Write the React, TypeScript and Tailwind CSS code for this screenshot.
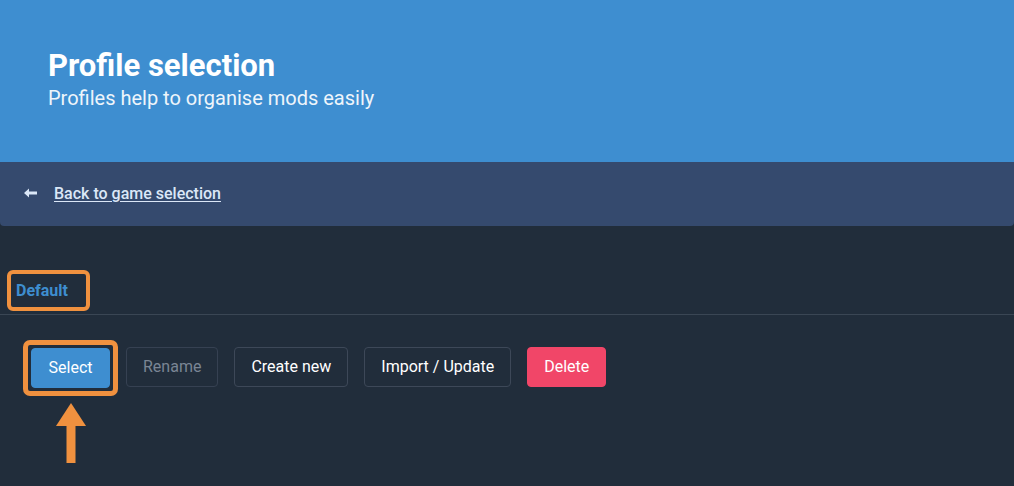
import React from 'react';

const buttons = [
  { label: 'Rename', cls: 'border border-[#364152] text-[#7a8594] bg-transparent' },
  { label: 'Create new', cls: 'border border-[#3d4858] text-white bg-transparent' },
  { label: 'Import / Update', cls: 'border border-[#3d4858] text-white bg-transparent' },
  { label: 'Delete', cls: 'border border-[#f14668] text-white bg-[#f14668]' },
];

export default function App() {
  return (
    <div className="w-[1014px] h-[486px] overflow-hidden bg-[#212d3b] font-['Roboto',sans-serif]">
      {/* hero */}
      <div className="h-[162px] bg-[#3e8ed0] px-12 pt-[46px]">
        <h1 className="text-[31px] leading-[40px] font-bold text-white">Profile selection</h1>
        <p className="text-[20px] leading-[24px] text-[#eef5fb]">Profiles help to organise mods easily</p>
      </div>

      {/* back bar */}
      <div className="h-16 bg-[#354a6e] rounded-b-[4px] flex items-center pl-6 gap-[17px]">
        <svg width="13" height="10" viewBox="0 0 13 10" className="mt-[-2px]">
          <path d="M0 5 L5 0.5 L5 3.6 L13 3.6 L13 6.4 L5 6.4 L5 9.5 Z" fill="#dbe7f7" />
        </svg>
        <a className="text-[16px] font-medium text-[#dbe7f7] underline underline-offset-2">Back to game selection</a>
      </div>

      {/* tabs */}
      <div className="mt-11 border-b border-[#3a4654] px-[7px] pb-[3px]">
        <div className="w-[83px] h-[41px] border-4 border-[#f0913f] rounded-[6px] flex items-center pl-[5px]">
          <span className="text-[16px] font-bold text-[#3e8ed0]">Default</span>
        </div>
      </div>

      {/* actions */}
      <div className="flex items-start pl-[23px] pt-[25px] gap-4">
        <div className="flex flex-col items-center">
          <div className="border-[5px] border-[#f0913f] rounded-[7px] p-[3px]">
            <button className="h-10 w-[79px] border border-[#3e8ed0] rounded-[4px] bg-[#3e8ed0] text-white text-[16px]">Select</button>
          </div>
          <svg width="32" height="60" viewBox="0 0 32 60" className="mt-[7px]">
            <polygon points="16,0 31,23 1,23" fill="#f0913f" />
            <rect x="11.5" y="22" width="9" height="38" fill="#f0913f" />
          </svg>
        </div>
        <div className="flex gap-4 pt-[7px] -ml-[8px]">
          {buttons.map((b) => (
            <button key={b.label} className={`h-10 px-4 rounded-[4px] text-[16px] ${b.cls}`}>
              {b.label}
            </button>
          ))}
        </div>
      </div>
    </div>
  );
}
